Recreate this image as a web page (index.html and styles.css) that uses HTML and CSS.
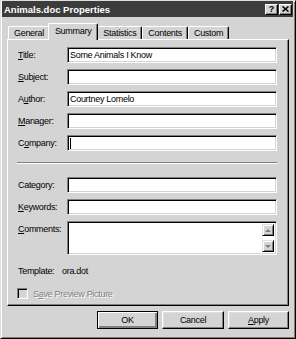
FILE: index.html
```html
<!DOCTYPE html>
<html>
<head>
<meta charset="utf-8">
<link rel="stylesheet" href="styles.css">
</head>
<body>
<div class="window">
  <div class="titlebar">
    <span class="title">Animals.doc Properties</span>
    <div class="caption-btns">
      <span class="cbtn help">?</span>
      <span class="cbtn close"><svg width="7" height="6" viewBox="0 0 7 6"><path d="M0.5 0.5 L6.5 5.5 M6.5 0.5 L0.5 5.5" stroke="#000" stroke-width="1.6" fill="none"/></svg></span>
    </div>
  </div>
  <div class="body">
    <div class="tabs">
      <div class="tab">General</div>
      <div class="tab active">Summary</div>
      <div class="tab">Statistics</div>
      <div class="tab">Contents</div>
      <div class="tab">Custom</div>
    </div>
    <div class="panel">
      <div class="field"><span class="label"><u>T</u>itle:</span><div class="input">Some Animals I Know</div></div>
      <div class="field"><span class="label"><u>S</u>ubject:</span><div class="input"></div></div>
      <div class="field"><span class="label">A<u>u</u>thor:</span><div class="input">Courtney Lomelo</div></div>
      <div class="field"><span class="label"><u>M</u>anager:</span><div class="input"></div></div>
      <div class="field"><span class="label">C<u>o</u>mpany:</span><div class="input"><span class="caret"></span></div></div>
      <div class="sep"></div>
      <div class="field"><span class="label">Cate<u>g</u>ory:</span><div class="input"></div></div>
      <div class="field"><span class="label"><u>K</u>eywords:</span><div class="input"></div></div>
      <div class="field comments"><span class="label"><u>C</u>omments:</span>
        <div class="input textarea">
          <div class="ta-text"></div>
          <div class="scroll">
            <span class="sbtn"><span class="arrow up"></span></span>
            <span class="track"></span>
            <span class="sbtn"><span class="arrow down"></span></span>
          </div>
        </div>
      </div>
      <div class="template"><span class="tlabel">Template:</span><span>ora.dot</span></div>
      <div class="check"><span class="box"></span><span class="disabled">S<u>a</u>ve Preview Picture</span></div>
    </div>
    <div class="buttons">
      <div class="btn default"><span>OK</span></div>
      <div class="btn wide"><span>Cancel</span></div>
      <div class="btn"><span><u>A</u>pply</span></div>
    </div>
  </div>
</div>
</body>
</html>
```
FILE: styles.css
```css
* { box-sizing: border-box; }
body {
  margin: 0;
  font-family: "Liberation Sans", Arial, sans-serif;
  font-size: 9px;
  letter-spacing: -0.3px;
  color: #000;
  background: #d4d4d4;
}
.window {
  width: 296px;
  height: 339px;
  background: #d4d4d4;
  border: 1px solid;
  border-color: #dfdfdf #000 #000 #dfdfdf;
  box-shadow: inset 1px 1px #fff, inset -1px -1px #808080;
  padding: 0 2px 2px 1px;
  display: flex;
  flex-direction: column;
}
.titlebar {
  height: 16px;
  background: #3c3c3c;
  display: flex;
  align-items: center;
  justify-content: space-between;
  padding: 0 1px 0 2px;
}
.title {
  color: #fff;
  font-weight: bold;
  font-size: 9.5px;
  letter-spacing: 0;
}
.caption-btns { display: flex; gap: 1px; }
.cbtn {
  width: 13px;
  height: 11px;
  background: #d4d4d4;
  border: 1px solid;
  border-color: #fff #000 #000 #fff;
  box-shadow: inset -1px -1px #808080;
  display: flex;
  align-items: center;
  justify-content: center;
  font-weight: bold;
  font-size: 9px;
  letter-spacing: 0;
  line-height: 1;
}
.body {
  padding: 0 4px 0 5px;
  display: flex;
  flex-direction: column;
}
.tabs {
  display: flex;
  align-items: flex-end;
  padding: 6px 0 0 1px;
  height: 22px;
}
.tab {
  height: 13px;
  padding: 0 5px;
  border-top: 1px solid #fff;
  border-left: 1px solid #fff;
  border-right: 1px solid #000;
  box-shadow: inset -1px 0 #808080;
  border-radius: 2px 2px 0 0;
  display: flex;
  align-items: center;
  background: #d4d4d4;
}
.tab.active {
  height: 17px;
  margin: 0 -1px -1px -2px;
  padding: 0 6px 2px 6px;
  position: relative;
  z-index: 2;
}
.tab.active + .tab { margin-left: 0; }
.panel {
  border: 1px solid;
  border-color: #fff #000 #000 #fff;
  box-shadow: inset -1px -1px #808080;
  padding: 7px 11px 5px 10px;
  display: flex;
  flex-direction: column;
  gap: 6px;
  height: 267px;
}
.field {
  display: grid;
  grid-template-columns: 49px 1fr;
  align-items: center;
  height: 16px;
}
.label { white-space: nowrap; }
.input {
  height: 16px;
  background: #fff;
  border: 1px solid;
  border-color: #808080 #fff #fff #808080;
  box-shadow: inset 1px 1px #000, inset -1px -1px #d4d4d4;
  padding: 0 2px;
  display: flex;
  align-items: center;
  white-space: nowrap;
}
.caret {
  width: 1px;
  height: 11px;
  background: #000;
}
.sep {
  height: 2px;
  border-top: 1px solid #808080;
  border-bottom: 1px solid #fff;
  margin: 5px 0 7px -1px;
}
.field.comments {
  height: 34px;
  align-items: start;
}
.field.comments .label { padding-top: 3px; }
.textarea {
  height: 34px;
  padding: 2px 2px 2px 2px;
  align-items: stretch;
}
.ta-text { flex: 1; }
.scroll {
  width: 12px;
  display: flex;
  flex-direction: column;
}
.track { flex: 1; background: #fff; }
.sbtn {
  height: 12px;
  background: #d4d4d4;
  border: 1px solid;
  border-color: #dfdfdf #000 #000 #dfdfdf;
  box-shadow: inset 1px 1px #fff, inset -1px -1px #808080;
  display: flex;
  align-items: center;
  justify-content: center;
}
.arrow {
  width: 0;
  height: 0;
  border-left: 3px solid transparent;
  border-right: 3px solid transparent;
}
.arrow.up { border-bottom: 3px solid #808080; }
.arrow.down { border-top: 3px solid #808080; }
.template {
  display: flex;
  align-items: center;
  height: 11px;
  margin-top: 4px;
}
.tlabel { width: 44px; }
.check {
  display: flex;
  align-items: center;
  height: 11px;
  margin-top: 6px;
  margin-left: -1px;
  gap: 5px;
}
.box {
  width: 11px;
  height: 11px;
  background: #d4d4d4;
  border: 1px solid;
  border-color: #808080 #fff #fff #808080;
  box-shadow: inset 1px 1px #000, inset -1px -1px #dfdfdf;
}
.disabled {
  color: #808080;
  text-shadow: 1px 1px #fff;
}
.buttons {
  display: flex;
  justify-content: flex-end;
  gap: 4px;
  margin-top: 5px;
}
.btn {
  width: 61px;
  height: 18px;
  background: #d4d4d4;
  border: 1px solid;
  border-color: #fff #000 #000 #fff;
  box-shadow: inset -1px -1px #808080, inset 1px 1px #dfdfdf;
  display: flex;
  align-items: center;
  justify-content: center;
}
.btn.wide { width: 62px; }
.btn.default {
  border: 1px solid #000;
  box-shadow: inset 1px 1px #fff, inset -2px -2px #808080;
}
```
